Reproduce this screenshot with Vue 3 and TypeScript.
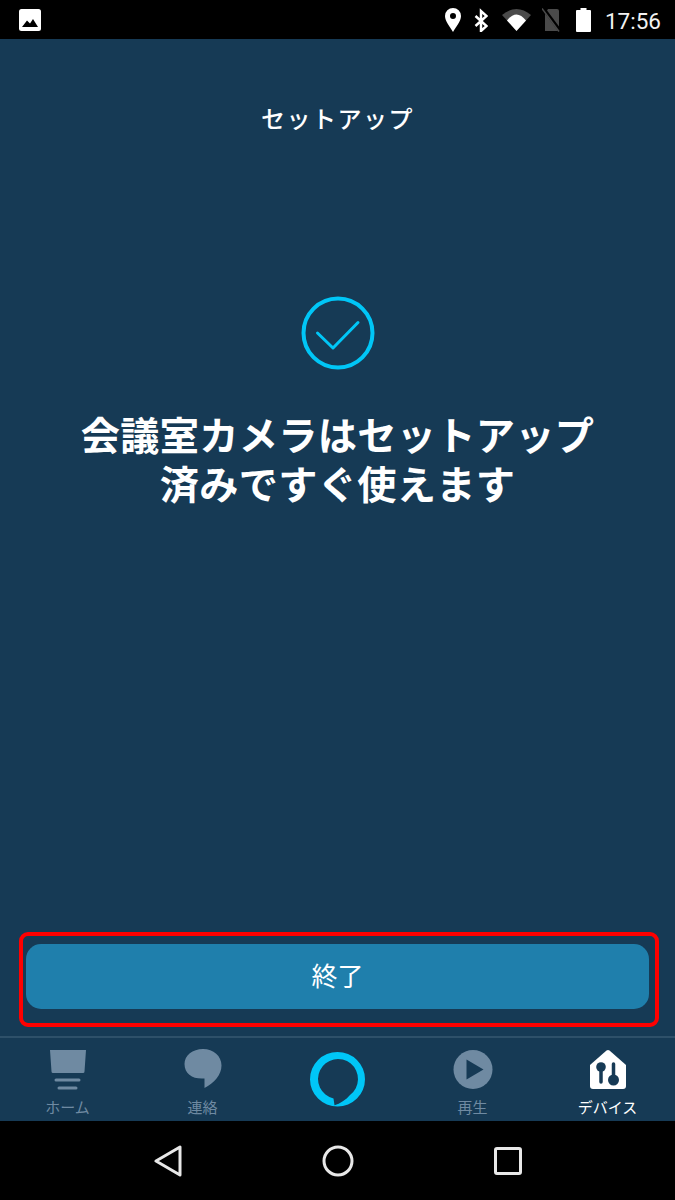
<template>
  <div class="screen">
    <!-- status bar -->
    <div class="status">
      <svg class="photo" width="22" height="22" viewBox="0 0 22 22">
        <rect width="22" height="22" rx="2.500" fill="#fff" />
        <path d="M3 18l5-6.500 3 3 3-4.500 5 8z" fill="#000" />
      </svg>
      <div class="status-right">
        <svg width="16" height="24" viewBox="0 0 16 24">
          <path fill-rule="evenodd" fill="#fff" d="M8 0a8 8 0 0 1 8 8c0 5-5 11-8 16C5 19 0 13 0 8a8 8 0 0 1 8-8zm0 5a3 3 0 1 0 0 6 3 3 0 0 0 0-6z" />
        </svg>
        <svg class="bt" width="14" height="24" viewBox="0 0 14 24">
          <path d="M1.500 8l11 10-5.500 5V3l5.500 5-11 10" fill="none" stroke="#fff" stroke-width="2.500" />
        </svg>
        <svg class="wifi" width="29" height="24" viewBox="0 0 29 24">
          <path d="M0 7Q14.500-5 29 7L14.500 23z" fill="#4a4a4a" />
          <path d="M5 12.500Q14.500 .5 24 12.500L14.500 23z" fill="#fff" />
        </svg>
        <svg class="sim" width="20" height="24" viewBox="0 0 20 24">
          <path d="M6 1h9a2 2 0 0 1 2 2v20H3V6z" fill="#4a4a4a" />
          <path d="M1 0l18 24" stroke="#000" stroke-width="3.500" />
          <path d="M0 .500l17 23" stroke="#4a4a4a" stroke-width="1.500" />
        </svg>
        <svg class="battery" width="15" height="24" viewBox="0 0 15 24">
          <path d="M4.500 0h6v2H14a1 1 0 0 1 1 1v20a1 1 0 0 1-1 1H1a1 1 0 0 1-1-1V3a1 1 0 0 1 1-1h3.500z" fill="#fff" />
        </svg>
        <span class="clock">17:56</span>
      </div>
    </div>

    <!-- content -->
    <main class="content">
      <h1 class="title">セットアップ</h1>
      <svg class="check" width="74" height="74" viewBox="0 0 74 74">
        <circle cx="37" cy="37" r="34.500" fill="none" stroke="#00c6f7" stroke-width="4" />
        <path d="M16.500 37L32 52 57 26.500" fill="none" stroke="#00c6f7" stroke-width="3" stroke-linecap="round" stroke-linejoin="round" />
      </svg>
      <p class="message">会議室カメラはセットアップ<br />済みですぐ使えます</p>
    </main>

    <!-- finish button with annotation frame -->
    <div class="frame">
      <button class="finish" type="button">終了</button>
    </div>

    <!-- tabs -->
    <nav class="tabs">
      <div v-for="tab in tabs" :key="tab.id" class="tab" :class="{ active: tab.id === 'devices', alexa: tab.id === 'alexa' }">
        <svg v-if="tab.id === 'home'" width="38" height="42" viewBox="0 0 38 42">
          <path d="M1 0h36l-1.500 21.500a1.500 1.500 0 0 1-1.500 1.500H4a1.500 1.500 0 0 1-1.500-1.500z" fill="#6f8aa2" />
          <rect x="5.500" y="28.500" width="26" height="3" rx="1.500" fill="#6f8aa2" />
          <rect x="8.500" y="36.500" width="20" height="3" rx="1.500" fill="#6f8aa2" />
        </svg>
        <svg v-else-if="tab.id === 'contact'" width="38" height="42" viewBox="0 0 38 42">
          <path d="M19-1C29.500-1 37.500 6 37.500 15.500 37.500 25 30 33 20.500 38V28.500C9 29.500 .5 24 .5 14 .5 5.500 8.500-1 19-1z" fill="#6f8aa2" />
        </svg>
        <svg v-else-if="tab.id === 'alexa'" width="55" height="55" viewBox="0 0 55 55">
          <path fill-rule="evenodd" fill="#00c6f7" d="M27.500 0a27.500 27.300 0 1 1 0 54.600 27.500 27.300 0 0 1 0-54.600zM24.500 53.300L23.500 46.500A20 20 0 1 1 40 43C36 48 30 51.500 24.500 53.300z" />
        </svg>
        <svg v-else-if="tab.id === 'play'" width="40" height="42" viewBox="0 0 40 42">
          <circle cx="20" cy="19.500" r="19.500" fill="#6f8aa2" />
          <path d="M13.500 9.500L30.500 19.500 13.500 29.500z" fill="#163a55" />
        </svg>
        <svg v-else width="38" height="42" viewBox="0 0 38 42">
          <path d="M17.500.6a2.500 2.500 0 0 1 3 0L37 15v21a3 3 0 0 1-3 3H4a3 3 0 0 1-3-3V15z" fill="#fff" />
          <circle cx="12" cy="17" r="4.800" fill="#163a55" />
          <path d="M12 20v12" stroke="#163a55" stroke-width="3.500" stroke-linecap="round" />
          <path d="M24.500 14v16" stroke="#163a55" stroke-width="3.500" stroke-linecap="round" />
          <circle cx="24.500" cy="30" r="5.500" fill="#163a55" />
        </svg>
        <span v-if="tab.label" class="tab-label">{{ tab.label }}</span>
      </div>
    </nav>

    <!-- android nav -->
    <div class="sysnav">
      <svg width="28" height="32" viewBox="0 0 28 32">
        <path d="M26 2v28L2 16z" fill="none" stroke="#e8e8e8" stroke-width="3" stroke-linejoin="round" />
      </svg>
      <svg width="32" height="32" viewBox="0 0 32 32">
        <circle cx="16" cy="16" r="14" fill="none" stroke="#e8e8e8" stroke-width="3" />
      </svg>
      <svg width="28" height="28" viewBox="0 0 28 28">
        <rect x="1.500" y="1.500" width="25" height="25" rx="1.500" fill="none" stroke="#e8e8e8" stroke-width="3" />
      </svg>
    </div>
  </div>
</template>

<script setup lang="ts">
interface Tab {
  id: string;
  label: string;
}

const tabs: Tab[] = [
  { id: "home", label: "ホーム" },
  { id: "contact", label: "連絡" },
  { id: "alexa", label: "" },
  { id: "play", label: "再生" },
  { id: "devices", label: "デバイス" }
];
</script>

<style>
html,
body {
  margin: 0;
  background: #163a55;
}
</style>

<style scoped>
.screen {
  width: 675px;
  height: 1200px;
  display: flex;
  flex-direction: column;
  background: #163a55;
  font-family: "Roboto", "Noto Sans CJK JP", sans-serif;
  color: #fff;
  overflow: hidden;
}

.status {
  height: 39px;
  flex: none;
  background: #000;
  display: flex;
  align-items: center;
  justify-content: space-between;
  padding: 0 14px 0 19px;
  box-sizing: border-box;
}

.status-right {
  display: flex;
  align-items: center;
}

.bt {
  margin-left: 13px;
}

.wifi {
  margin-left: 14px;
}

.sim {
  margin-left: 11px;
}

.battery {
  margin-left: 14px;
}

.clock {
  margin-left: 14px;
  padding-top: 3px;
  font-size: 22.500px;
  color: #f2f2f2;
}

.content {
  flex: 1;
  display: flex;
  flex-direction: column;
  align-items: center;
}

.title {
  margin: 66px 0 0;
  font-size: 24px;
  line-height: 30px;
  font-weight: 500;
  letter-spacing: 1.500px;
}

.check {
  margin-top: 161px;
}

.message {
  margin: 43px 0 0;
  font-size: 39.200px;
  letter-spacing: 0.300px;
  line-height: 49px;
  font-weight: 700;
  text-align: center;
}

.frame {
  flex: none;
  margin: 0 16px 9px 19px;
  padding: 8px 6px 14px 3px;
  border: 4px solid #ff0000;
  border-radius: 9px;
}

.finish {
  display: block;
  width: 100%;
  height: 65px;
  padding: 0 0 4px;
  border: none;
  border-radius: 15px;
  background: #1f7fac;
  color: #fff;
  font-family: inherit;
  font-size: 26px;
}

.tabs {
  flex: none;
  height: 85px;
  box-sizing: border-box;
  border-top: 2px solid #2e5069;
  display: grid;
  grid-template-columns: repeat(5, 135px);
}

.tab {
  display: flex;
  flex-direction: column;
  align-items: center;
  padding-top: 12px;
  color: #6f8aa2;
}

.tab svg {
  flex: none;
  height: 42px;
  overflow: visible;
}

.tab.alexa {
  padding-top: 14px;
}

.tab.alexa svg {
  height: 55px;
}

.tab.active {
  color: #fff;
}

.tab-label {
  margin-top: 6px;
  font-size: 15px;
  line-height: 20px;
}

.sysnav {
  flex: none;
  height: 79px;
  background: #000;
  display: flex;
  align-items: center;
  justify-content: center;
  gap: 140px;
}
</style>
